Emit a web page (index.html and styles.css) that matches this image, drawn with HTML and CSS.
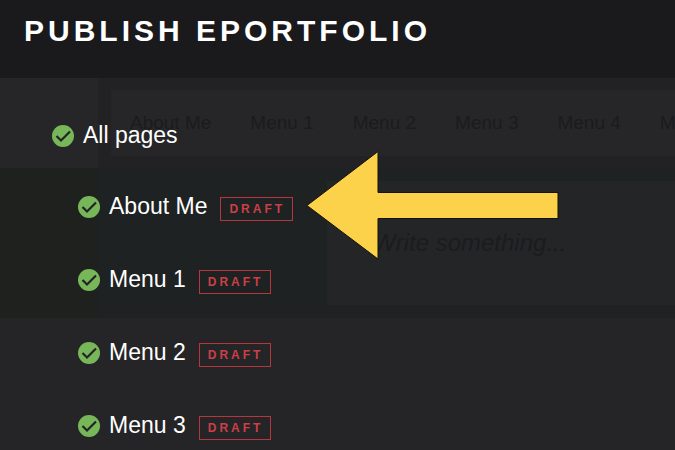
FILE: index.html
```html
<!DOCTYPE html>
<html lang="en">
<head>
  <meta charset="UTF-8">
  <meta name="viewport" content="width=device-width, initial-scale=1.0">
  <title>Publish ePortfolio</title>
  <link rel="stylesheet" href="styles.css">
</head>
<body>
  <header class="header">
    <h1>PUBLISH EPORTFOLIO</h1>
  </header>

  <main class="main">
    <!-- dimmed editor behind the publish list -->
    <div class="editor" aria-hidden="true">
      <div class="editor-top">
        <div class="editor-side"></div>
        <div class="editor-nav">
          <span>About Me</span>
          <span>Menu 1</span>
          <span>Menu 2</span>
          <span>Menu 3</span>
          <span>Menu 4</span>
          <span>Menu 5</span>
        </div>
      </div>
      <div class="editor-body">
        <div class="editor-side green"></div>
        <div class="editor-text">Write something...</div>
      </div>
    </div>

    <form class="pages">
      <div class="page all">
        <input type="checkbox" id="all" checked>
        <label for="all">All pages</label>
      </div>
      <div class="page">
        <input type="checkbox" id="about" checked>
        <label for="about">About Me</label>
        <span class="draft">DRAFT</span>
      </div>
      <div class="page">
        <input type="checkbox" id="menu1" checked>
        <label for="menu1">Menu 1</label>
        <span class="draft">DRAFT</span>
      </div>
      <div class="page">
        <input type="checkbox" id="menu2" checked>
        <label for="menu2">Menu 2</label>
        <span class="draft">DRAFT</span>
      </div>
      <div class="page">
        <input type="checkbox" id="menu3" checked>
        <label for="menu3">Menu 3</label>
        <span class="draft">DRAFT</span>
      </div>
    </form>

    <svg class="arrow" width="254" height="110" viewBox="0 0 254 110" aria-hidden="true">
      <path d="M2 55.500 L73 1.500 V42.500 H253 V68.500 H73 V109 Z" fill="#fbd249" stroke="#15130d" stroke-width="1"/>
    </svg>
  </main>
</body>
</html>
```

FILE: styles.css
```css
* {
  margin: 0;
  padding: 0;
  box-sizing: border-box;
  font-family: "Liberation Sans", Arial, sans-serif;
}

body {
  min-height: 100vh;
  background: #252527;
  color: #fff;
  overflow: hidden;
}

.header {
  background: #1a1a1c;
  height: 78px;
  padding: 14px 24px;
}

h1 {
  font-size: 30px;
  line-height: 34px;
  letter-spacing: 4px;
  white-space: nowrap;
}

.main {
  position: relative;
}

/* editor */
.editor {
  position: absolute;
  top: 0;
  left: 0;
  right: 0;
  overflow: hidden;
}

.editor-top,
.editor-body {
  display: flex;
}

.editor-top {
  height: 90px;
  background: #222224;
}

.editor-body {
  height: 150px;
  background: #1e2222;
}

.editor-side {
  flex: 0 0 98px;
  background: #262628;
}

.editor-side.green {
  background: #1e211e;
}

.editor-nav {
  flex: 1;
  display: flex;
  align-items: center;
  gap: 39px;
  margin: 12px 0 12px 13px;
  padding-left: 19px;
  background: #262628;
  color: #1b1b1d;
  font-size: 19px;
  white-space: nowrap;
  overflow: hidden;
}

.editor-text {
  flex: 1;
  display: flex;
  align-items: center;
  margin: 13px 0 13px 229px;
  padding-left: 46px;
  background: #242527;
  color: #1b1c1e;
  font-size: 24px;
  font-style: italic;
}

/* page list */
.pages {
  position: relative;
  padding: 23px 0 0 78px;
}

.page {
  display: flex;
  align-items: center;
  height: 73px;
}

.page.all {
  height: 69px;
  margin-left: -26px;
}

.page input {
  appearance: none;
  width: 22px;
  height: 22px;
  margin-top: 1px;
  border-radius: 50%;
  background: #78b65a;
  cursor: pointer;
}

.page input:checked {
  background: #78b65a url("data:image/svg+xml,%3Csvg xmlns='http://www.w3.org/2000/svg' viewBox='0 0 22 22'%3E%3Cpath d='M4.500 11 L9 15.500 L18 6.500' fill='none' stroke='%23222426' stroke-width='2.200'/%3E%3C/svg%3E");
}

.page label {
  margin: 0 0 2px 9px;
  font-size: 23px;
  line-height: 28px;
  cursor: pointer;
}

.draft {
  margin: 4px 0 0 13px;
  padding: 0 7px 0 8px;
  border: 1px solid #b5363b;
  color: #cb4046;
  font-size: 12px;
  font-weight: bold;
  line-height: 22px;
  letter-spacing: 3px;
}

/* pointer over the first draft page */
.arrow {
  position: absolute;
  top: 72px;
  left: 305px;
}
```
